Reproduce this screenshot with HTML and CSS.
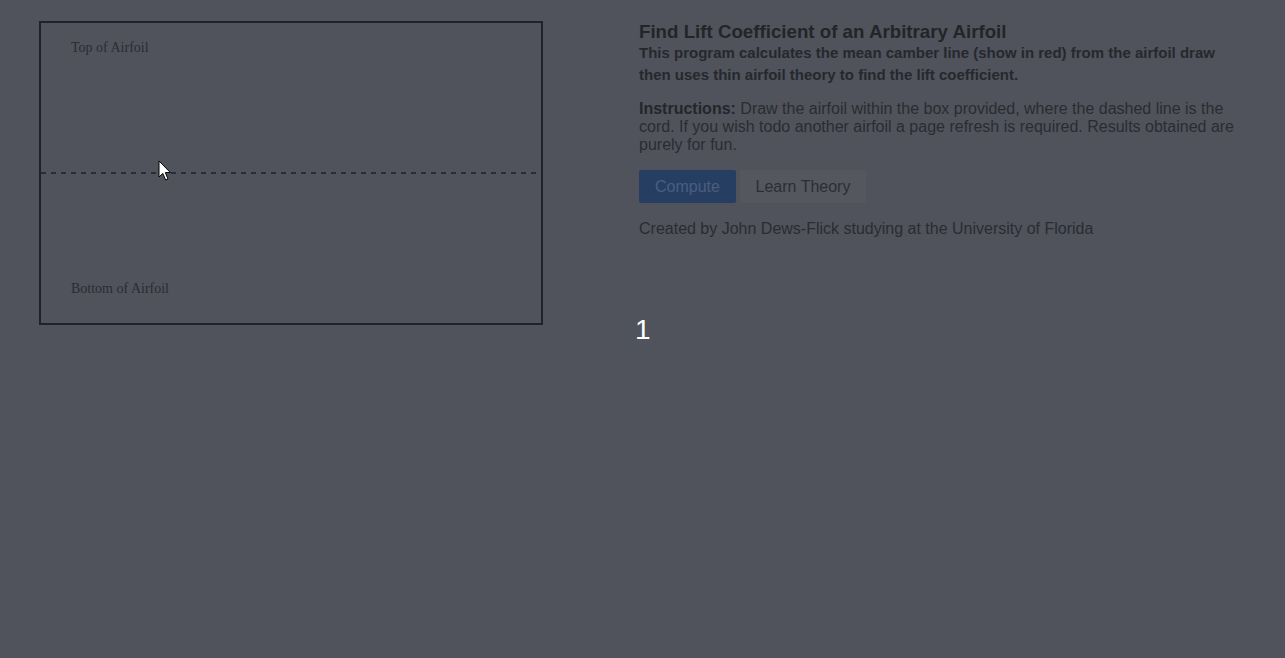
FILE: index.html
```html
<!DOCTYPE html>
<html>
<head>
<meta charset="utf-8">
<link rel="stylesheet" href="styles.css">
</head>
<body>
<div class="page">
  <div class="left">
    <svg class="board" width="500" height="300" viewBox="0 0 500 300">
      <text x="30" y="29" class="lbl">Top of Airfoil</text>
      <line x1="0" y1="150" x2="496" y2="150" class="cord"/>
      <text x="30" y="270" class="lbl">Bottom of Airfoil</text>
    </svg>
  </div>
  <div class="right">
    <h1 class="title">Find Lift Coefficient of an Arbitrary Airfoil</h1>
    <p class="sub">This program calculates the mean camber line (show in red) from the airfoil draw then uses thin airfoil theory to find the lift coefficient.</p>
    <p class="instr"><b>Instructions:</b> Draw the airfoil within the box provided, where the dashed line is the cord. If you wish todo another airfoil a page refresh is required. Results obtained are purely for fun.</p>
    <div class="btns">
      <button class="btn btn-primary">Compute</button>
      <button class="btn btn-default">Learn Theory</button>
    </div>
    <p class="credit">Created by John Dews-Flick studying at the University of Florida</p>
    <div class="result">1</div>
  </div>
</div>
<svg class="cursor" width="14" height="22" viewBox="0 0 14 22">
  <path d="M1 1 L1 17 L4.8 13.4 L7.6 20 L10 19 L7.3 12.6 L12.4 12.6 Z" fill="#fff" stroke="#000" stroke-width="1" stroke-linejoin="round"/>
</svg>
</body>
</html>
```

FILE: styles.css
```css
html, body {
  margin: 0;
  padding: 0;
  background: #50535c;
  height: 100%;
}
body {
  font-family: "Liberation Sans", Arial, sans-serif;
  color: #26282d;
  position: relative;
  overflow: hidden;
}
.page {
  display: grid;
  grid-template-columns: 600px 600px;
  padding: 21px 0 0 39px;
}
.board {
  display: block;
  border: 2px solid #1f2229;
}
.lbl {
  font-family: "Liberation Serif", "Times New Roman", serif;
  font-size: 14px;
  fill: #2a2c32;
}
.cord {
  stroke: #1f2229;
  stroke-width: 1.6;
  stroke-dasharray: 5 5;
}
.title {
  margin: 0;
  font-size: 18.72px;
  line-height: 21px;
  font-weight: bold;
  color: #232529;
}
.sub {
  margin: 0;
  font-size: 15px;
  line-height: 22px;
  font-weight: bold;
  color: #26282d;
}
.instr {
  margin: 14px 0 0;
  font-size: 16px;
  line-height: 18px;
  color: #2a2c31;
}
.instr b {
  color: #24262b;
}
.btns {
  display: flex;
  gap: 4px;
  margin-top: 16px;
}
.btn {
  font-family: "Liberation Sans", Arial, sans-serif;
  font-size: 16px;
  line-height: 19px;
  padding: 7px 0;
  border: 0;
  border-radius: 2px;
  margin: 0;
  white-space: nowrap;
  box-sizing: border-box;
}
.btn-primary {
  background: #273e63;
  color: #4a5e7f;
  width: 97px;
}
.btn-default {
  background: #55575e;
  color: #2c2e33;
  width: 126px;
}
.credit {
  margin: 17px 0 0;
  font-size: 16px;
  line-height: 18px;
  color: #2a2c31;
}
.result {
  margin: 76px 0 0 -4px;
  font-size: 28px;
  line-height: 32px;
  color: #ffffff;
}
.cursor {
  position: absolute;
  left: 158px;
  top: 160px;
}
```
